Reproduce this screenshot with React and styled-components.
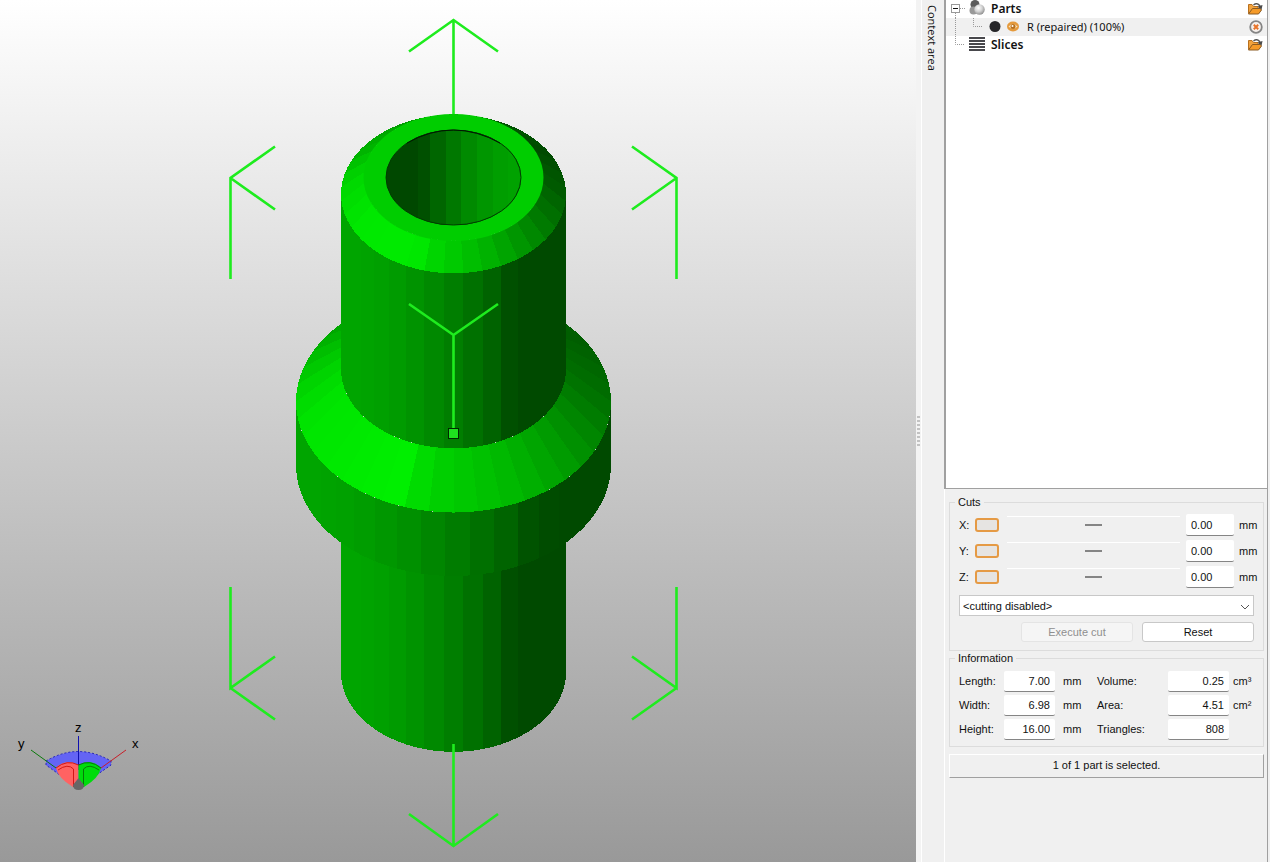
import React from "react";
import styled, { createGlobalStyle } from "styled-components";

const GlobalStyle = createGlobalStyle`
  * {
    box-sizing: border-box;
  }
  body {
    margin: 0;
    background: #f0f0f0;
    color: #111;
    font-family: "Liberation Sans", Arial, sans-serif;
    font-size: 11px;
  }
  button, input, select {
    font: inherit;
    color: inherit;
  }
`;

const Window = styled.main`
  display: flex;
  height: 100vh;
  overflow: hidden;
`;

const Viewport = styled.section`
  position: relative;
  flex: 1;
  min-width: 0;
  background: linear-gradient(#ffffff 0%, #999999 100%);
`;

const Scene = styled.svg`
  display: block;
  width: 100%;
  height: 100%;
`;

const AxisGizmo = styled.svg`
  position: absolute;
  left: 12px;
  bottom: 66px;
  width: 136px;
  height: 80px;
  font-size: 13px;
`;

const Splitter = styled.div`
  display: flex;
  flex-direction: column;
  align-items: center;
  justify-content: center;
  gap: 2px;
  width: 6px;
  background: #f3f3f3;
  border-right: 1px solid #fff;
`;

const Grip = styled.i`
  width: 3px;
  height: 2px;
  background: #c2c2c2;
`;

const ContextTab = styled.div`
  width: 22px;
  padding: 5px 6px 0 0;
  writing-mode: vertical-rl;
  font-family: "Open Sans", sans-serif;
  font-size: 11px;
  line-height: 12px;
  background: #f0f0f0;
`;

const Side = styled.aside`
  display: flex;
  flex-direction: column;
  width: 326px;
  padding-right: 2px;
`;

const Tree = styled.ul`
  flex: 1;
  margin: 0;
  padding: 0;
  list-style: none;
  background: #fff;
  border: 1px solid #a0a0a0;
  border-width: 0 1px 1px 2px;
  font-family: "Noto Sans", sans-serif;
`;

const TreeRow = styled.li`
  display: flex;
  align-items: center;
  height: 18px;
  padding: 0 4px 0 1px;
  background: ${(props) => (props.$selected ? "#f0f0f0" : "transparent")};
  font-size: ${(props) => (props.$bold ? "12px" : "11px")};
  font-weight: ${(props) => (props.$bold ? 600 : 400)};
`;

const TreeLabel = styled.span`
  flex: 1;
  padding-left: 4px;
  line-height: 16px;
  padding-bottom: 1px;
  white-space: nowrap;
`;

const IconButton = styled.button`
  display: flex;
  padding: 0;
  border: 0;
  background: none;
`;

const Panels = styled.div`
  display: flex;
  flex-direction: column;
  height: 373px;
  padding: 7px 3px 0 4px;
  border: 1px solid #a0a0a0;
  border-width: 0 1px 0 0;
  border-left: 1px solid #fff;
`;

const Group = styled.fieldset`
  min-width: 0;
  margin: 0 0 1px;
  padding: ${(props) => (props.$tight ? "4px 9px 5px" : "3px 9px 8px")};
  border: 1px solid #dcdcdc;
`;

const Legend = styled.legend`
  margin-left: -4px;
  padding: 0 3px;
  line-height: 13px;
`;

const CutRow = styled.div`
  display: grid;
  grid-template-columns: 16px 24px 1fr 48px 20px;
  align-items: center;
  height: 26px;
`;

const AxisToggle = styled.button`
  width: 24px;
  height: 14px;
  padding: 0;
  border: 2px solid #e59a45;
  border-radius: 3px;
  background: #e6e4e2;
`;

const Slider = styled.input`
  appearance: none;
  width: auto;
  min-width: 0;
  height: 18px;
  margin: 0 6px 0 8px;
  background: linear-gradient(#fff, #fff) 0 0 / 100% 1px no-repeat;

  &::-webkit-slider-thumb {
    appearance: none;
    width: 17px;
    height: 2px;
    background: #858585;
  }
`;

const Field = styled.input`
  width: 100%;
  min-width: 0;
  height: ${(props) => (props.$tall ? "22px" : "21px")};
  padding: 0 5px;
  border: 0;
  border-bottom: 1px solid #858585;
  border-radius: 2px;
  background: #fff;
  text-align: ${(props) => (props.$tall ? "left" : "right")};
`;

const Unit = styled.span`
  padding-left: ${(props) => (props.$wide ? "8px" : "4px")};
  white-space: nowrap;
`;

const CutUnit = styled.span`
  padding-left: 5px;
`;

const SelectBox = styled.div`
  display: flex;
  align-items: center;
  height: 21px;
  margin-top: 5px;
  border: 1px solid #c8c8c8;
  background: #fff;
`;

const ModeSelect = styled.select`
  appearance: none;
  flex: 1;
  height: 19px;
  padding: 0 3px;
  border: 0;
  background: none;
`;

const Chevron = styled.svg`
  width: 10px;
  height: 6px;
  margin: 2px 3px 0 -13px;
  pointer-events: none;
`;

const Actions = styled.div`
  display: flex;
  justify-content: flex-end;
  gap: 9px;
  margin-top: 6px;
`;

const Button = styled.button`
  width: 112px;
  height: 20px;
  padding: 0;
  border: 1px solid #c8c8c8;
  border-radius: 3px;
  background: #fff;

  &:disabled {
    border-color: #e4e4e4;
    background: #f5f5f5;
    color: #8f8f8f;
  }
`;

const InfoGrid = styled.div`
  display: grid;
  grid-template-columns: 45px 51px 42px 1fr 61px 25px;
  grid-auto-rows: 24px;
  align-items: center;
`;

const Status = styled.output`
  display: block;
  margin-top: 6px;
  height: 24px;
  border: 1px solid #a0a0a0;
  border-color: #fff #a0a0a0 #a0a0a0 #fff;
  line-height: 20px;
  text-align: center;
`;

// the part is seen from above, so every circle is flattened by the same ratio
const CX = 453.5;
const TILT = 0.705;
const rad = (deg) => (deg * Math.PI) / 180;

// 0deg faces the viewer, positive angles turn to the right
const point = (ring, deg) => [
  CX + ring.r * Math.sin(rad(deg)),
  ring.y + ring.r * TILT * Math.cos(rad(deg)),
];

const WALL = [
  [-90, 165], [-60, 165], [-40, 160], [-30, 155], [-20, 147], [-10, 137],
  [0, 126], [10, 113], [20, 99], [30, 80], [40, 74], [90, 74],
];
const SLOPE = [
  [-180, 120], [-150, 145], [-120, 180], [-95, 212], [-75, 228], [-35, 236],
  [-20, 240], [-12, 214], [0, 203], [20, 188], [40, 166], [60, 142],
  [90, 110], [120, 94], [180, 100],
];
const BEVEL = [
  [-180, 140], [-120, 180], [-95, 215], [-60, 232], [-22, 235], [-13, 216],
  [0, 202], [20, 178], [40, 150], [60, 122], [90, 90], [120, 74], [180, 100],
];

const shade = (stops, deg) => {
  const a = Math.max(stops[0][0], Math.min(deg, stops[stops.length - 1][0]));
  const i = Math.max(1, stops.findIndex((s) => s[0] >= a));
  const [a0, g0] = stops[i - 1];
  const [a1, g1] = stops[i];
  return `rgb(0,${Math.round(g0 + ((g1 - g0) * (a - a0)) / (a1 - a0))},0)`;
};

const Facets = ({ top, bottom, stops, from, to, step, offset }) => {
  const list = [];
  let a = from;
  while (a < to) {
    const next = Math.min(to, Math.floor((a - offset) / step + 1.001) * step + offset);
    const mid = (a + next) / 2;
    const pts = [
      point(top, a), point(top, mid), point(top, next),
      point(bottom, next), point(bottom, mid), point(bottom, a),
    ];
    list.push(
      <polygon key={a} points={pts.map((p) => p.join()).join(" ")} fill={shade(stops, mid)} />
    );
    a = next;
  }
  return <g shapeRendering="crispEdges">{list}</g>;
};

const HOLE_BANDS = [
  [380, "#004800"], [418, "#005000"], [430, "#006600"], [446, "#007800"],
  [461, "#008a00"], [477, "#009600"], [493, "#009e00"], [508, "#00a200"],
];

const ARROWS = [
  "M453.5 114V20M409 51.5L453.5 20L498 51.5",
  "M453.5 744V846M409 814L453.5 846L498 814",
  "M230.5 279V178L275 146.5M230.5 178L275 209.5",
  "M676.5 279V178L632 146.5M676.5 178L632 209.5",
  "M230.5 587V688L275 656.5M230.5 688L275 719.5",
  "M676.5 587V688L632 656.5M676.5 688L632 719.5",
  "M453.5 429V335M409 304L453.5 335L498 304",
];

const PartModel = () => (
  <Scene viewBox="0 0 916 862" role="img" aria-label="Part preview">
    <defs>
      <clipPath id="bore">
        <ellipse cx={CX} cy="177.5" rx="67.5" ry="47.5" />
      </clipPath>
    </defs>
    <Facets top={{ r: 112.5, y: 450 }} bottom={{ r: 112.5, y: 672.5 }} stops={WALL} from={-90} to={90} step={10} offset={5} />
    <Facets top={{ r: 157.5, y: 401.5 }} bottom={{ r: 157.5, y: 465 }} stops={WALL} from={-90} to={90} step={9} offset={6} />
    <Facets top={{ r: 112.5, y: 369 }} bottom={{ r: 157.5, y: 401.5 }} stops={SLOPE} from={-180} to={180} step={9} offset={0} />
    <Facets top={{ r: 112.5, y: 194 }} bottom={{ r: 112.5, y: 369 }} stops={WALL} from={-90} to={90} step={10} offset={5} />
    <Facets top={{ r: 89.5, y: 177.5 }} bottom={{ r: 112.5, y: 194 }} stops={BEVEL} from={-180} to={180} step={10} offset={5} />
    <ellipse cx={CX} cy="177.5" rx="90" ry="63.5" fill="#00cd00" />
    <g clipPath="url(#bore)" shapeRendering="crispEdges">
      {HOLE_BANDS.map(([x, fill]) => (
        <rect key={x} x={x} y="128" width={525 - x} height="100" fill={fill} />
      ))}
    </g>
    <ellipse cx={CX} cy="177.5" rx="67.5" ry="47.5" fill="none" stroke="#003c00" />
    <path d="M407 143Q453 117 500 143" fill="none" stroke="#001800" />
    <g fill="none" stroke="#1eec1e" strokeWidth="2.6">
      {ARROWS.map((d) => (
        <path key={d} d={d} />
      ))}
    </g>
    <rect x="448.5" y="428.5" width="10" height="10" fill="#1fe01f" stroke="#002800" />
  </Scene>
);

const Axes = () => (
  <AxisGizmo viewBox="12 716 136 80" aria-label="Axes">
    <path d="M46 761Q78 742 111 761V765L78 788L46 765Z" fill="#6464f4" stroke="#2222b8" strokeDasharray="2 2" />
    <path d="M31 750L56 768" stroke="#0a7a0a" />
    <path d="M126 750L101 768" stroke="#c81e28" />
    <path d="M78.5 736V770" stroke="#1010b0" />
    <path d="M56 768Q66 758 78.5 765V788L73 787Q58 778 56 768Z" fill="#ff6262" />
    <path d="M101 768Q91 758 78.5 765V788L84 787Q99 778 101 768Z" fill="#00dc0c" />
    <path d="M56 768Q67 759 78.5 765M58 770Q68 763 73.5 769V787" fill="none" stroke="#d01818" />
    <path d="M101 768Q90 759 78.5 765M99 770Q89 763 83.5 769V787" fill="none" stroke="#087808" />
    <path d="M73 785L78.5 778L84 785Q84 790 78.5 790Q73 790 73 785Z" fill="#666" />
    <text x="75" y="732">z</text>
    <text x="18" y="748">y</text>
    <text x="132" y="748">x</text>
  </AxisGizmo>
);

const FolderIcon = () => (
  <svg width="16" height="14" viewBox="0 0 16 14">
    <path d="M1.5 11.5V2.5H5L6.5 4.500H11V7" fill="#f2a23c" stroke="#b8701e" />
    <path d="M6.500 3Q10 0 13 4" fill="none" stroke="#555" strokeWidth="1.500" />
    <path d="M10.500 4.500L15.500 3L14.500 8Z" fill="#4a4a4a" />
    <path d="M1.500 12L5.500 6.500H13L14.500 8L11.500 12Z" fill="#f59a28" stroke="#8a5a22" />
  </svg>
);

const RemoveIcon = () => (
  <svg width="14" height="14" viewBox="0 0 14 14">
    <circle cx="7" cy="7" r="5.8" fill="#f6f0ec" stroke="#858585" strokeWidth="1.8" />
    <path d="M4.8 4.8L9.2 9.2M9.2 4.8L4.8 9.2" stroke="#e8742a" strokeWidth="2" />
  </svg>
);

const PartsIcon = () => (
  <svg width="40" height="18" viewBox="0 0 40 18">
    <defs>
      <radialGradient id="ball" cx="0.4" cy="0.35" r="0.7">
        <stop offset="0" stopColor="#fff" />
        <stop offset="0.5" stopColor="#d4d4d4" />
        <stop offset="1" stopColor="#8a8a8a" />
      </radialGradient>
    </defs>
    <path d="M8.5 13V18" stroke="#999" strokeDasharray="1 1" />
    <path d="M13 8.500H18" stroke="#999" strokeDasharray="1 1" />
    <rect x="4.5" y="4.5" width="8" height="8" fill="#fff" stroke="#999" />
    <path d="M6 8.500H11" stroke="#111" />
    <circle cx="28" cy="4.5" r="4.5" fill="#5c5c5c" />
    <circle cx="26.5" cy="10.5" r="4" fill="#999" />
    <circle cx="32.5" cy="9.5" r="5.2" fill="url(#ball)" />
  </svg>
);

const PartIcon = () => (
  <svg width="76" height="18" viewBox="0 0 76 18">
    <path d="M8.5 0V18M26.5 0V8.5H35" fill="none" stroke="#999" strokeDasharray="1 1" />
    <circle cx="48" cy="8.5" r="5.5" fill="#252528" />
    <ellipse cx="66" cy="8.5" rx="6" ry="5" fill="#e59a3c" />
    <path d="M61.5 8.5Q66 3.500 70.5 8.5Q66 13 61.5 8.5Z" fill="#fae3bd" />
    <circle cx="66" cy="8.500" r="2.5" fill="#b8701c" />
    <circle cx="65.5" cy="8" r="1" fill="#fff" />
  </svg>
);

const SlicesIcon = () => (
  <svg width="40" height="18" viewBox="0 0 40 18">
    <path d="M8.5 0V8.5H18" fill="none" stroke="#999" strokeDasharray="1 1" />
    <path d="M22 2H38M22 5H38M22 8H38M22 11H38M22 14H38" stroke="#48484c" strokeWidth="2" />
  </svg>
);

const INFO = [
  ["Length:", "7.00", "mm", "Volume:", "0.25", "cm³"],
  ["Width:", "6.98", "mm", "Area:", "4.51", "cm²"],
  ["Height:", "16.00", "mm", "Triangles:", "808", ""],
];

const App = () => {
  return (
    <>
      <GlobalStyle />
      <Window>
        <Viewport>
          <PartModel />
          <Axes />
        </Viewport>
        <Splitter>
          {Array.from({ length: 8 }, (_, i) => (
            <Grip key={i} />
          ))}
        </Splitter>
        <ContextTab>Context area</ContextTab>
        <Side>
          <Tree>
            <TreeRow $bold>
              <PartsIcon />
              <TreeLabel>Parts</TreeLabel>
              <IconButton aria-label="Open part"><FolderIcon /></IconButton>
            </TreeRow>
            <TreeRow $selected>
              <PartIcon />
              <TreeLabel>R (repaired) (100%)</TreeLabel>
              <IconButton aria-label="Remove part"><RemoveIcon /></IconButton>
            </TreeRow>
            <TreeRow $bold>
              <SlicesIcon />
              <TreeLabel>Slices</TreeLabel>
              <IconButton aria-label="Open slices"><FolderIcon /></IconButton>
            </TreeRow>
          </Tree>

          <Panels>
            <Group>
              <Legend>Cuts</Legend>
              {["X", "Y", "Z"].map((axis) => (
                <CutRow key={axis}>
                  <label htmlFor={`cut-${axis}`}>{axis}:</label>
                  <AxisToggle aria-label={`Toggle ${axis} cut`} />
                  <Slider type="range" aria-label={`${axis} position`} />
                  <Field $tall id={`cut-${axis}`} defaultValue="0.00" />
                  <CutUnit>mm</CutUnit>
                </CutRow>
              ))}
              <SelectBox>
                <ModeSelect aria-label="Cutting mode">
                  <option>&lt;cutting disabled&gt;</option>
                </ModeSelect>
                <Chevron viewBox="0 0 10 6">
                  <path d="M1 1L5 5L9 1" fill="none" stroke="#555" />
                </Chevron>
              </SelectBox>
              <Actions>
                <Button disabled>Execute cut</Button>
                <Button>Reset</Button>
              </Actions>
            </Group>

            <Group $tight>
              <Legend>Information</Legend>
              <InfoGrid>
                {INFO.map(([name, value, unit, name2, value2, unit2]) => (
                  <React.Fragment key={name}>
                    <label htmlFor={name}>{name}</label>
                    <Field id={name} readOnly value={value} />
                    <Unit $wide>{unit}</Unit>
                    <label htmlFor={name2}>{name2}</label>
                    <Field id={name2} readOnly value={value2} />
                    <Unit>{unit2}</Unit>
                  </React.Fragment>
                ))}
              </InfoGrid>
            </Group>
            <Status>1 of 1 part is selected.</Status>
          </Panels>
        </Side>
      </Window>
    </>
  );
};

export default App;
